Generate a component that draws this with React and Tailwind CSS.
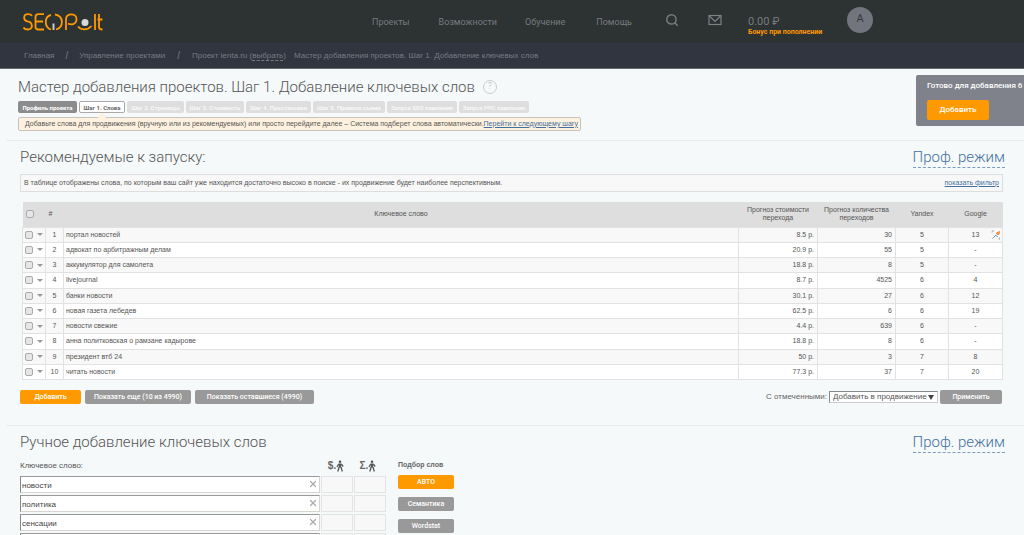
import React from 'react';
import { Search, X } from 'lucide-react';

const NAV = [
  { label: 'Проекты', gap: 'mr-[29px]' },
  { label: 'Возможности', gap: 'mr-7' },
  { label: 'Обучение', gap: 'mr-[31px]' },
  { label: 'Помощь', gap: 'mr-[33px]' },
];

const STEPS = [
  { label: 'Профиль проекта', width: 'w-[59px]', state: 'done' },
  { label: 'Шаг 1. Слова', width: 'w-[46px]', state: 'active' },
  { label: 'Шаг 2. Страницы', width: 'w-[57px]' },
  { label: 'Шаг 3. Стоимость', width: 'w-[58px]' },
  { label: 'Шаг 4. Простановка', width: 'w-[65px]' },
  { label: 'Шаг 5. Правила съема', width: 'w-[72px]' },
  { label: 'Запуск SEO кампании', width: 'w-[70px]' },
  { label: 'Запуск PPC кампании', width: 'w-[70px]' },
];

const ROWS = [
  ['портал новостей', '8.5 р.', 30, 5, '13'],
  ['адвокат по арбитражным делам', '20.9 р.', 55, 5, '-'],
  ['аккумулятор для самолета', '18.8 р.', 8, 5, '-'],
  ['livejournal', '8.7 р.', 4525, 6, '4'],
  ['банки новости', '30.1 р.', 27, 6, '12'],
  ['новая газета лебедев', '62.5 р.', 6, 6, '19'],
  ['новости свежие', '4.4 р.', 639, 6, '-'],
  ['анна политковская о рамзане кадырове', '18.8 р.', 8, 6, '-'],
  ['президент втб 24', '50 р.', 3, 7, '8'],
  ['читать новости', '77.3 р.', 37, 7, '20'],
];

const WORDS = ['новости', 'политика', 'сенсации', ''];

const Logo = () => (
  <svg viewBox="0 0 80 20" className="h-5 w-20" fill="none" stroke="#f90" strokeWidth="1.8" aria-label="SeoPult">
    <path d="M9 3.8C8 2.5 6.500 2.200 5 2.200C0 2.200 0 8.600 4.500 9.300C10 10 10.500 17.500 4.800 17.500C2.800 17.500 1.300 17 .500 15.500" />
    <path d="M21 2.200H15.500C13.500 2.200 12.500 3.200 12.500 5V15C12.500 16.800 13.500 17.500 15.500 17.500H21M12.500 9.500H20" />
    <path d="M28 3C21 4.500 21 15.500 28 17.500M32 2.500C41 4 41 15.500 33 17.500" />
    <path d="M30.500 11.500V18" stroke="#ccc" strokeWidth="2" />
    <path d="M43 18V7C43 .800 53.500 .800 53.500 7C53.500 13 47.500 13 45 11.500" />
    <path d="M55 14.500C58.500 18.500 64.500 18.500 68.500 14" />
    <circle cx="62" cy="10.500" r="3.500" fill="#d8d8d8" stroke="none" />
    <path d="M72 2V18M76 2V15C76 17 77 17.500 79.500 17.500M74.500 7.500H79.500" />
  </svg>
);

const MailIcon = () => (
  <svg viewBox="0 0 14 12" className="h-3 w-3.5" fill="none" stroke="#7c8085" strokeWidth="1.2">
    <rect x="1" y="1.500" width="12" height="9" />
    <path d="M1.500 2L7 7.500L12.500 2" />
  </svg>
);

const Walker = ({ sign, label }) => (
  <div className="flex w-8 items-center justify-center text-[10px] leading-3 font-bold text-[#666]" title={label}>
    {sign}.
    <svg viewBox="0 0 8 12" className="h-3 w-2" fill="#555" stroke="#555">
      <circle cx="4" cy="1.700" r="1.300" stroke="none" />
      <path d="M2.800 3.500H5.200V7.500H2.800Z" stroke="none" />
      <path d="M5 7L6.300 11.500M3.200 7L1.800 11.500M2.800 3.800L1 7M5.200 3.800L7.200 6.500" fill="none" strokeWidth="1.300" />
    </svg>
  </div>
);

const ExpandIcon = () => (
  <svg viewBox="0 0 10 10" className="h-2.5 w-2.5" fill="none" strokeWidth="1">
    <path d="M1 1H3M1 1.500V2.500M7.500 9H9M8.500 7.500V9" stroke="#aaa" />
    <path d="M1.500 8.500L5 5" stroke="#69a5c8" />
    <path d="M5.500 3L8.500 1.500L8 4.500L6 4.500Z" fill="#f2a566" stroke="#ee8b45" />
    <path d="M5 5.500L7 7" stroke="#69a5c8" />
  </svg>
);

const Button = ({ children, className = '', orange = false }) => (
  <button
    type="button"
    className={`flex shrink-0 items-center justify-center rounded-xs [font-family:Roboto,sans-serif] font-medium whitespace-nowrap text-white ${orange ? 'bg-[#ff9900]' : 'bg-[#999]'} ${className}`}
  >
    {children}
  </button>
);

const SectionTitle = ({ children }) => (
  <div className="mr-[19px] ml-5 flex h-6 items-start justify-between [font-family:Roboto,sans-serif] text-[15px] leading-5 font-light">
    <h2 className="text-[#555]">{children}</h2>
    <a href="#prof" className="border-b border-dashed border-[#7b9dbd] text-[#4470a0]">Проф. режим</a>
  </div>
);

const Check = ({ label }) => (
  <input
    type="checkbox"
    aria-label={label}
    className="block h-2 w-2 appearance-none rounded-xs border border-[#aaa] bg-[#e6e6e6]"
  />
);

const Header = () => (
  <header>
    <div className="flex h-[43px] items-center bg-[#2d3232] pl-[23px] [font-family:Roboto,sans-serif] text-[#777b80]">
      <a href="#home" className="mr-[269px]"><Logo /></a>
      <nav className="flex text-[9px] leading-4">
        {NAV.map((item) => (
          <a key={item.label} href="#nav" className={item.gap}>{item.label}</a>
        ))}
      </nav>
      <button type="button" aria-label="Поиск" className="mr-[29px] pb-1"><Search className="h-3.5 w-3.5" strokeWidth={2.5} /></button>
      <button type="button" aria-label="Сообщения" className="mr-[26px] pb-1"><MailIcon /></button>
      <div className="mr-[25px] pt-2">
        <div className="text-[11px] leading-3">0.00 ₽</div>
        <a href="#bonus" className="block text-[7px] leading-2 font-bold whitespace-nowrap text-[#f90]">Бонус при пополнении</a>
      </div>
      <button type="button" className="mb-1 flex h-[26px] w-[26px] items-center justify-center rounded-full bg-[#73757e] text-[11px] text-[#33373c]">А</button>
    </div>
    <nav className="flex h-[26px] items-center border-b border-[#666a70] bg-[#31353f] pl-6 text-[8px] text-[#777b82]">
      <a href="#home">Главная</a>
      <span className="mx-[11px] text-[10px]">/</span>
      <a href="#projects">Управление проектами</a>
      <span className="mx-3 text-[10px]">/</span>
      <span>Проект lenta.ru (<a href="#select" className="border-b border-dashed border-[#777b82]">выбрать</a>)</span>
      <span className="ml-2">Мастер добавления проектов. Шаг 1. Добавление ключевых слов</span>
    </nav>
  </header>
);

const stepStyle = (state) => {
  if (state === 'done') return 'bg-[#8c8c8c] text-white';
  if (state === 'active') return 'border border-[#aaa] bg-white text-[#666]';
  return 'bg-[#dedede] text-[#f8f8f8]';
};

const Wizard = () => (
  <section className="mt-2 ml-[18px]">
    <div className="flex h-5 items-center [font-family:Roboto,sans-serif] font-light">
      <h1 className="text-[15px] leading-5 whitespace-nowrap text-[#555]">Мастер добавления проектов. Шаг 1. Добавление ключевых слов</h1>
      <button type="button" aria-label="Справка" className="ml-2 flex h-3.5 w-3.5 items-center justify-center rounded-full border border-[#ccc] text-[9px] text-[#bbb]">?</button>
    </div>
    <ol className="mt-1 flex gap-0.5 [font-family:Roboto,sans-serif] text-[6px] font-bold">
      {STEPS.map((step) => (
        <li key={step.label} className={`flex h-3 items-center justify-center overflow-hidden rounded-xs whitespace-nowrap ${step.width} ${stepStyle(step.state)}`}>{step.label}</li>
      ))}
    </ol>
    <div className="relative mt-1 flex h-3.5 w-[563px] items-center justify-between rounded-xs border border-[#c9c3bd] bg-[#fff1df] pr-1 pl-1.5 text-[7px] whitespace-nowrap text-[#555]">
      <span className="absolute -top-1 left-20 h-1.5 w-1.5 rotate-45 bg-[#fff1df]" />
      <span>Добавьте слова для продвижения (вручную или из рекомендуемых) или просто перейдите далее – Система подберет слова автоматически.</span>
      <a href="#next" className="text-[#4470a0] underline">Перейти к следующему шагу</a>
    </div>
  </section>
);

const KeywordTable = () => (
  <table className="h-[178px] w-full table-fixed border-collapse text-[7px] leading-2 text-[#555]">
    <colgroup>
      <col className="w-[23px]" />
      <col className="w-[18px]" />
      <col />
      <col className="w-[79px]" />
      <col className="w-[78px]" />
      <col className="w-[53px]" />
      <col className="w-[54px]" />
    </colgroup>
    <thead>
      <tr className="h-[25px] bg-[#dedede] text-center [&>th]:p-0 [&>th]:font-normal">
        <th><div className="pl-[3px]"><Check label="Выбрать все" /></div></th>
        <th><div className="pr-2">#</div></th>
        <th>Ключевое слово</th>
        <th>Прогноз стоимости<br />перехода</th>
        <th>Прогноз количества<br />переходов</th>
        <th>Yandex</th>
        <th>Google</th>
      </tr>
    </thead>
    <tbody>
      {ROWS.map(([word, cost, count, yandex, google], i) => (
        <tr key={word} className="bg-white odd:bg-[#f8f8f8] [&>td]:border [&>td]:border-[#e2e2e2] [&>td]:p-0">
          <td>
            <div className="flex items-center gap-1 pl-0.5">
              <Check label={word} />
              <span className="h-0 w-0 border-x-3 border-t-3 border-x-transparent border-t-[#999]" />
            </div>
          </td>
          <td className="text-center">{i + 1}</td>
          <td><div className="pl-0.5">{word}</div></td>
          <td className="text-right"><div className="pr-[3px]">{cost}</div></td>
          <td className="text-right"><div className="pr-[3px]">{count}</div></td>
          <td className="text-center">{yandex}</td>
          <td className="relative text-center">
            {google}
            {i === 0 && <span className="absolute top-0.5 right-px"><ExpandIcon /></span>}
          </td>
        </tr>
      ))}
    </tbody>
  </table>
);

const Recommended = () => (
  <section className="mt-[9px] ml-1.5 border-t border-[#e8ecee] pt-1.5">
    <div className="-ml-1.5">
      <SectionTitle>Рекомендуемые к запуску:</SectionTitle>
      <div className="mt-[3px] mr-[21px] ml-5 flex h-[18px] items-center justify-between border border-[#dedede] bg-[#f8f8f8] px-[3px] text-[7px] text-[#555]">
        <span>В таблице отображены слова, по которым ваш сайт уже находится достаточно высоко в поиске - их продвижение будет наиболее перспективным.</span>
        <a href="#filter" className="text-[#4470a0] underline">показать фильтр</a>
      </div>
      <div className="mt-2.5 mr-[21px] ml-[22px]"><KeywordTable /></div>
      <div className="mt-2.5 mr-[22px] ml-5 flex h-3.5 items-center gap-1 text-[7px]">
        <Button orange className="h-3.5 w-[61px]">Добавить</Button>
        <Button className="h-3.5 w-[106px]">Показать еще (10 из 4990)</Button>
        <Button className="h-3.5 w-[119px]">Показать оставшиеся (4990)</Button>
        <label htmlFor="bulk" className="ml-auto text-[8px] text-[#666]">С отмеченными:</label>
        <div className="relative -ml-0.5">
          <select id="bulk" className="block h-3 w-[109px] appearance-none border border-[#ccc] border-t-[#888] border-l-[#888] bg-white pl-[3px] text-[8px] leading-2.5 text-[#555]">
            <option>Добавить в продвижение</option>
          </select>
          <span className="pointer-events-none absolute top-1 right-1 border-x-3 border-t-5 border-x-transparent border-t-[#444]" />
        </div>
        <Button className="-ml-0.5 h-3.5 w-[62px]">Применить</Button>
      </div>
    </div>
  </section>
);

const Manual = () => (
  <section className="mt-[21px] ml-1.5 border-t border-[#e8ecee] pt-1.5">
    <div className="-ml-1.5">
      <SectionTitle>Ручное добавление ключевых слов</SectionTitle>
      <div className="ml-5 flex gap-3 text-[7px]">
        <div>
          <div className="flex h-5 items-center">
            <div className="w-[300px] text-[8px] text-[#555]">Ключевое слово:</div>
            <Walker sign="$" label="Стоимость перехода" />
            <Walker sign="Σ" label="Количество переходов" />
          </div>
          <div className="flex flex-col gap-0.5">
            {WORDS.map((word, i) => (
              <div key={i} className="flex gap-px">
                <div className="relative">
                  <input
                    defaultValue={word}
                    aria-label={`Ключевое слово ${i + 1}`}
                    className="block h-[17px] w-[300px] border border-[#d8d4d0] border-t-[#999] border-l-[#888] bg-white px-px pt-0.5 text-[8px] text-[#444]"
                  />
                  <button type="button" aria-label="Удалить" className="absolute top-[3px] right-0.5 text-[#aaa]"><X className="h-2.5 w-2.5" strokeWidth={3} /></button>
                </div>
                <div className="w-8 border border-[#e4e4e4] bg-[#f8f8f8]" />
                <div className="w-8 border border-[#e4e4e4] bg-[#f8f8f8]" />
              </div>
            ))}
          </div>
        </div>
        <div className="flex flex-col gap-2">
          <h3 className="mt-[7px] h-1 leading-1 font-bold text-[#666]">Подбор слов</h3>
          <Button orange className="h-3.5 w-14">АВТО</Button>
          <Button className="h-3.5 w-14">Семантика</Button>
          <Button className="h-3.5 w-14">Wordstat</Button>
        </div>
      </div>
    </div>
  </section>
);

const ReadyPanel = () => (
  <aside className="absolute top-[75px] right-0 h-[51px] w-[108px] overflow-hidden rounded-l-xs bg-[#7f828a] pt-1.5 pl-[11px] [font-family:Roboto,sans-serif] text-[8px] whitespace-nowrap text-white">
    <div className="leading-2.5 font-medium">Готово для добавления 6</div>
    <Button orange className="mt-[9px] h-5 w-[62px]">Добавить</Button>
  </aside>
);

export default function App() {
  return (
    <div className="relative h-screen overflow-hidden bg-[#f5f9fa] [font-family:'Liberation_Sans',sans-serif]">
      <Header />
      <Wizard />
      <Recommended />
      <Manual />
      <ReadyPanel />
    </div>
  );
}
